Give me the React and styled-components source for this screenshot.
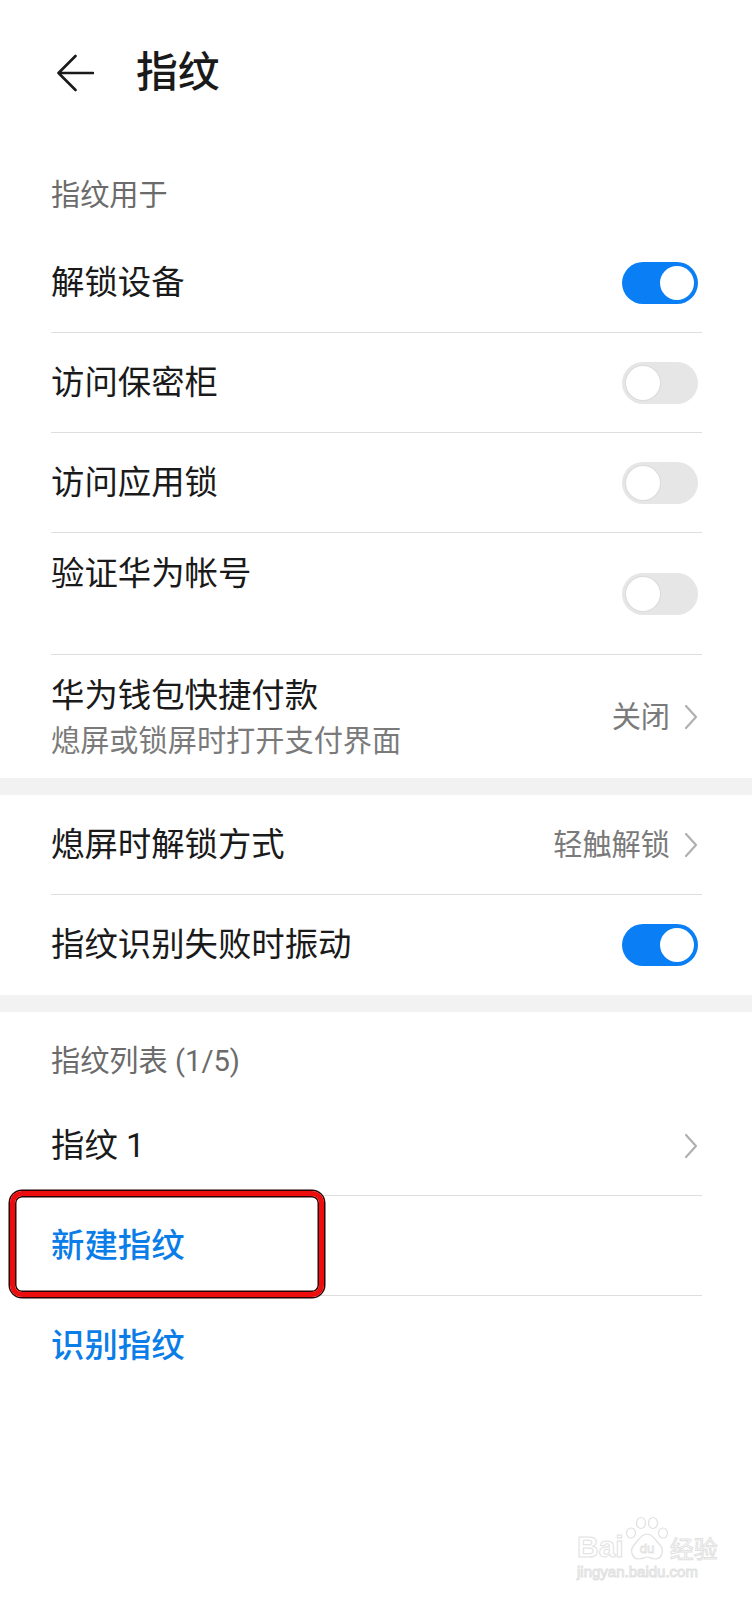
import React from "react";
import styled, { createGlobalStyle } from "styled-components";

const GlobalStyle = createGlobalStyle`
  html, body { margin: 0; padding: 0; background: #fff; }
  body {
    font-family: Roboto, "Noto Sans CJK SC", "Noto Sans", sans-serif;
    -webkit-font-smoothing: antialiased;
  }
  * { box-sizing: border-box; }
`;

const Page = styled.div`
  position: relative;
  width: 752px;
  min-height: 1600px;
  background: #fff;
  overflow: hidden;
`;

const Header = styled.header`
  height: 146px;
  display: flex;
  align-items: center;
  padding-left: 56px;
  gap: 42px;
`;

const BackButton = styled.button`
  border: 0;
  background: none;
  padding: 0;
  width: 38px;
  height: 38px;
  display: flex;
  align-items: center;
  justify-content: center;
  color: #1a1a1a;
`;

const Title = styled.h1`
  margin: 0;
  font-size: 41.8px;
  font-weight: 500;
  line-height: 56px;
  color: #1a1a1a;
`;

const SubHeader = styled.div`
  padding: ${(p) => (p.$first ? "29px 51px 18px" : "29px 51px 15px")};
  font-size: 29.2px;
  line-height: 40px;
  color: #6b6b6b;
`;

const Band = styled.div`
  height: 17px;
  background: #f2f2f2;
`;

const Row = styled.div`
  position: relative;
  display: flex;
  align-items: center;
  justify-content: space-between;
  min-height: ${(p) => p.$h || 100}px;
  margin: 0 50px 0 51px;
  padding-right: 4px;
  border-bottom: ${(p) => (p.$divider ? "1px solid #dedede" : "0")};
`;

const RowText = styled.div`
  display: flex;
  flex-direction: column;
  align-self: ${(p) => (p.$top ? "flex-start" : "center")};
  padding-top: ${(p) => (p.$top ? 18 : 0)}px;
`;

const ItemTitle = styled.div`
  font-size: 33.4px;
  line-height: 46px;
  color: ${(p) => (p.$accent ? "#0a7de8" : "#1a1a1a")};
  font-weight: ${(p) => (p.$accent ? 500 : 400)};
`;

const ItemSub = styled.div`
  margin-top: 2px;
  font-size: 29.2px;
  line-height: 40px;
  color: #7a7a7a;
`;

const Trailing = styled.div`
  display: flex;
  align-items: center;
  gap: 14px;
`;

const Value = styled.span`
  font-size: 29.2px;
  line-height: 40px;
  color: #7a7a7a;
`;

const Track = styled.span`
  position: relative;
  display: inline-block;
  flex-shrink: 0;
  width: 76px;
  height: 42px;
  border-radius: 21px;
  background: ${(p) => (p.$on ? "#0a7ff5" : "#e6e6e6")};
`;

const Knob = styled.span`
  position: absolute;
  top: 4px;
  left: ${(p) => (p.$on ? 38 : 4)}px;
  width: 34px;
  height: 34px;
  border-radius: 50%;
  background: #fff;
  box-shadow: ${(p) => (p.$on ? "none" : "0 0 0 1px rgba(0,0,0,0.05)")};
`;

const Highlight = styled.div`
  position: absolute;
  left: -41px;
  top: -5px;
  width: 314px;
  height: 106px;
  border: 5px solid #ee0d0d;
  border-radius: 12px;
  box-shadow: 0 0 0 1.5px #2a0000, inset 0 0 0 1.5px #2a0000;
  pointer-events: none;
`;

const Watermark = styled.div`
  position: absolute;
  left: 577px;
  top: 1516px;
  display: flex;
  flex-direction: column;
  gap: 2px;
  pointer-events: none;
  opacity: 0.85;
`;

const MarkLine = styled.div`
  display: flex;
  align-items: flex-end;
`;

const MarkText = styled.span`
  font-family: "Liberation Sans", "Noto Sans CJK SC", sans-serif;
  font-size: ${(p) => p.$size}px;
  font-weight: ${(p) => p.$weight || 400};
  line-height: 1;
  color: #fff;
  -webkit-text-stroke: 1px #dcdcdc;
`;

const Arrow = () => (
  <svg width="38" height="38" viewBox="0 0 38 38" fill="none">
    <path
      d="M37 19H2.5M19.5 2L2.5 19L19.5 36"
      stroke="currentColor"
      strokeWidth="2.6"
      strokeLinecap="round"
      strokeLinejoin="round"
    />
  </svg>
);

const Chevron = () => (
  <svg width="14" height="26" viewBox="0 0 14 26" fill="none">
    <path
      d="M2 2L12 13L2 24"
      stroke="#b0b0b0"
      strokeWidth="2.2"
      strokeLinecap="round"
      strokeLinejoin="round"
    />
  </svg>
);

const Toggle = ({ on }) => (
  <Track $on={on}>
    <Knob $on={on} />
  </Track>
);

const Paw = () => (
  <svg width="46" height="46" viewBox="0 0 46 46" fill="none" stroke="#dcdcdc" strokeWidth="1.2">
    <ellipse cx="17" cy="7" rx="4.5" ry="5.5" fill="#fff" />
    <ellipse cx="29" cy="7" rx="4.5" ry="5.5" fill="#fff" />
    <ellipse cx="7" cy="17" rx="4.5" ry="5" fill="#fff" />
    <ellipse cx="39" cy="17" rx="4.5" ry="5" fill="#fff" />
    <path d="M23 18c-6 0-9 7-13 11-4 4-3 14 5 14 4 0 5-2 8-2s4 2 8 2c8 0 9-10 5-14-4-4-7-11-13-11z" fill="#fff" />
    <text x="23" y="37" textAnchor="middle" fontSize="13" fontFamily="Liberation Sans, sans-serif" fill="#fff" stroke="#dcdcdc" strokeWidth="0.8">du</text>
  </svg>
);

export default function App() {
  return (
    <Page>
      <GlobalStyle />
      <Header>
        <BackButton aria-label="返回">
          <Arrow />
        </BackButton>
        <Title>指纹</Title>
      </Header>

      <SubHeader $first>指纹用于</SubHeader>
      <Row $divider>
        <ItemTitle>解锁设备</ItemTitle>
        <Toggle on />
      </Row>
      <Row $divider>
        <ItemTitle>访问保密柜</ItemTitle>
        <Toggle />
      </Row>
      <Row $divider>
        <ItemTitle>访问应用锁</ItemTitle>
        <Toggle />
      </Row>
      <Row $divider $h={122}>
        <RowText $top>
          <ItemTitle>验证华为帐号</ItemTitle>
        </RowText>
        <Toggle />
      </Row>
      <Row $h={123}>
        <RowText>
          <ItemTitle>华为钱包快捷付款</ItemTitle>
          <ItemSub>熄屏或锁屏时打开支付界面</ItemSub>
        </RowText>
        <Trailing>
          <Value>关闭</Value>
          <Chevron />
        </Trailing>
      </Row>

      <Band />

      <Row $divider>
        <ItemTitle>熄屏时解锁方式</ItemTitle>
        <Trailing>
          <Value>轻触解锁</Value>
          <Chevron />
        </Trailing>
      </Row>
      <Row>
        <ItemTitle>指纹识别失败时振动</ItemTitle>
        <Toggle on />
      </Row>

      <Band />

      <SubHeader>指纹列表 (1/5)</SubHeader>
      <Row $divider>
        <ItemTitle>指纹 1</ItemTitle>
        <Chevron />
      </Row>
      <Row $divider>
        <ItemTitle $accent>新建指纹</ItemTitle>
        <Highlight />
      </Row>
      <Row>
        <ItemTitle $accent>识别指纹</ItemTitle>
      </Row>

      <Watermark>
        <MarkLine>
          <MarkText $size={30} $weight={700}>Bai</MarkText>
          <Paw />
          <MarkText $size={24}>经验</MarkText>
        </MarkLine>
        <MarkText $size={15}>jingyan.baidu.com</MarkText>
      </Watermark>
    </Page>
  );
}
